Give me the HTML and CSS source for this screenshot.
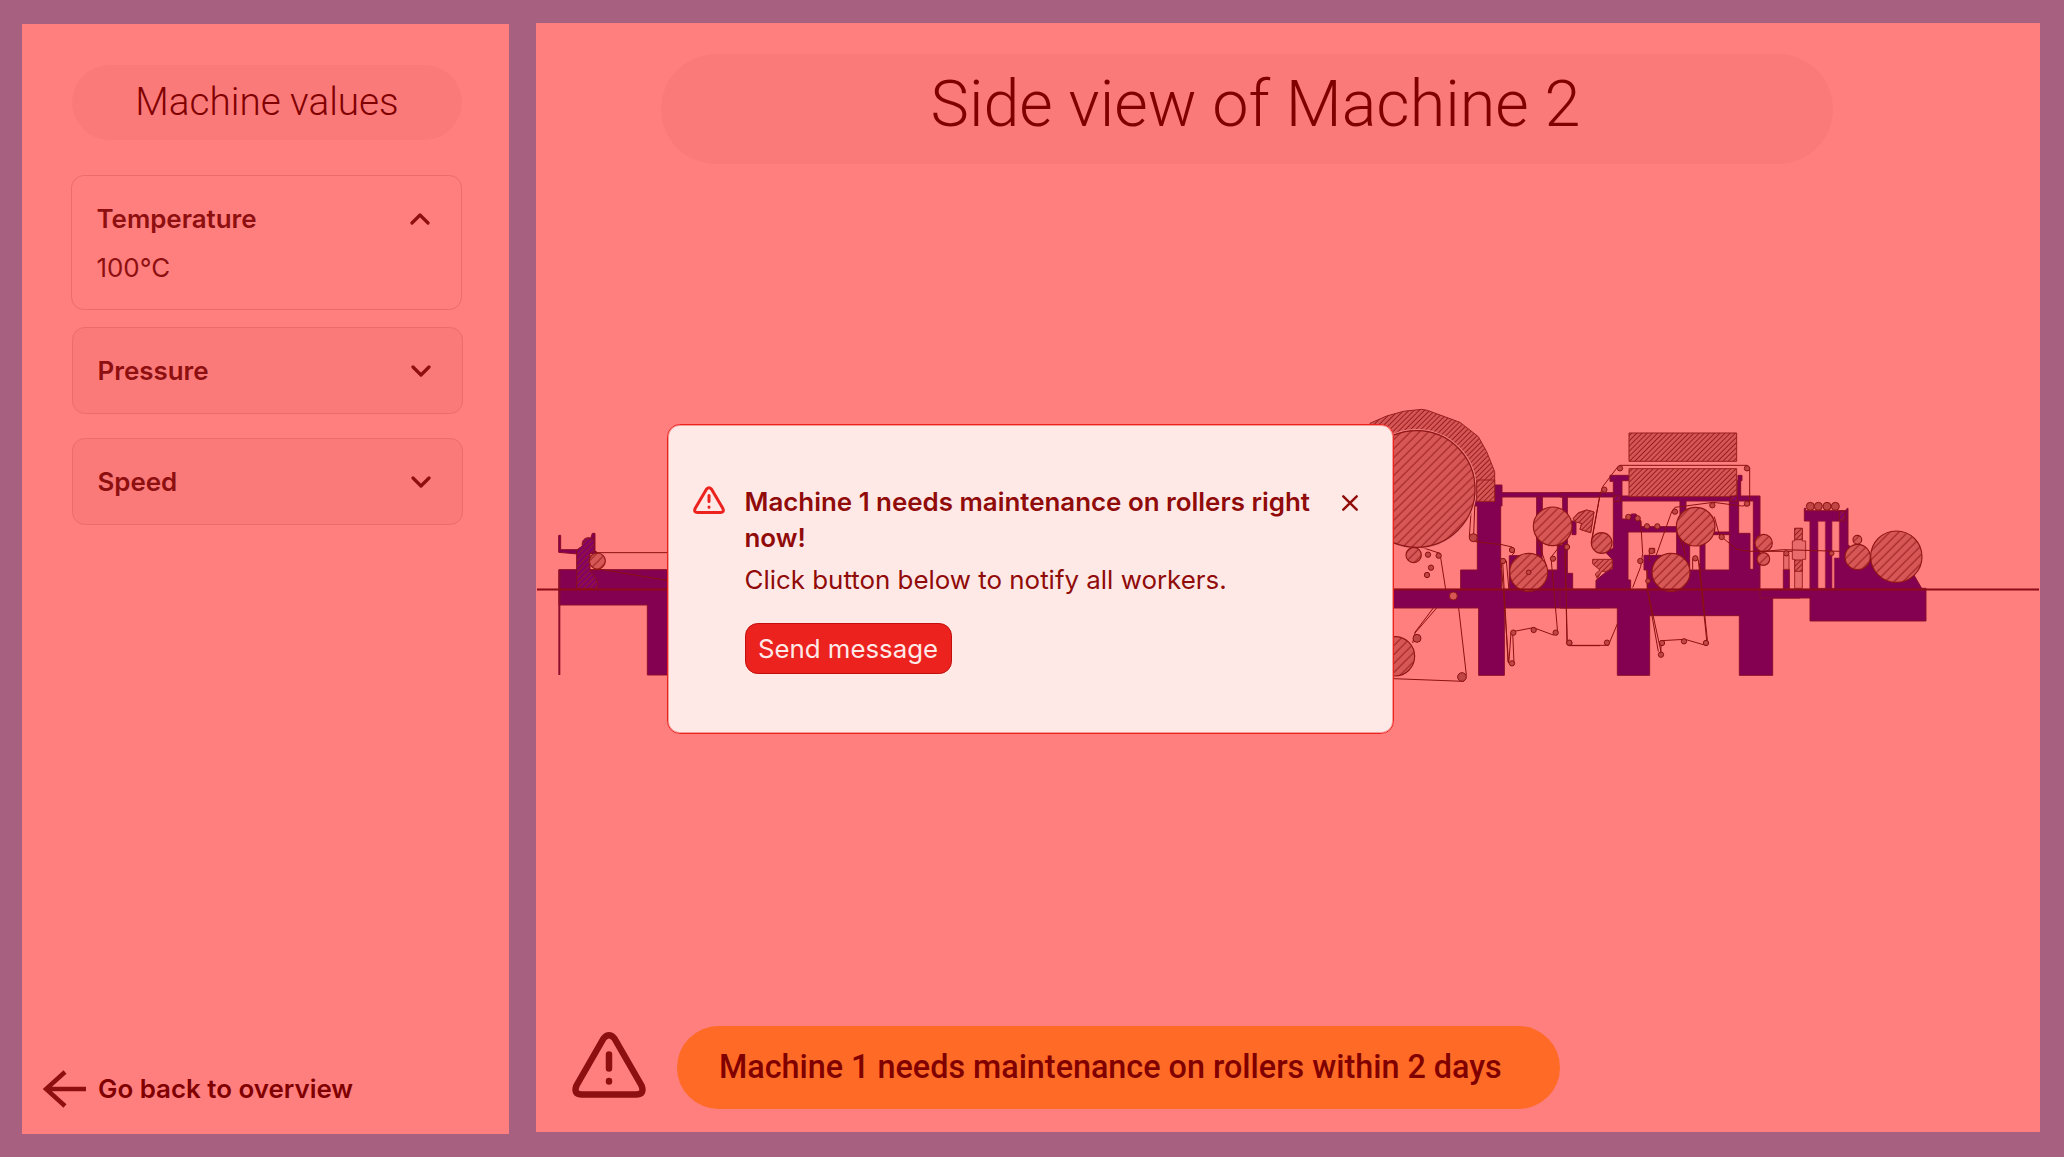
FILE: index.html
```html
<!DOCTYPE html>
<html lang="en">
<head>
<meta charset="utf-8">
<title>Side view of Machine 2</title>
<link rel="stylesheet" href="styles.css">
</head>
<body>
<aside class="sidebar">
  <h2 class="sidebar-title">Machine values</h2>
  <section class="card card-open">
    <div class="card-head"><span>Temperature</span>
      <svg class="chevron" viewBox="0 0 20 12"><path d="M2 10 10 2l8 8"/></svg></div>
    <p class="card-value">100°C</p>
  </section>
  <section class="card">
    <div class="card-head"><span>Pressure</span>
      <svg class="chevron" viewBox="0 0 20 12"><path d="M2 2l8 8 8-8"/></svg></div>
  </section>
  <section class="card card-last">
    <div class="card-head"><span>Speed</span>
      <svg class="chevron" viewBox="0 0 20 12"><path d="M2 2l8 8 8-8"/></svg></div>
  </section>
  <a class="back">
    <svg class="back-icon" viewBox="0 0 43 38"><path d="M43 19H3M22 2 3 19l19 17"/></svg>
    <span>Go back to overview</span>
  </a>
</aside>

<main class="main">
  <h1 class="main-title">Side view of Machine 2</h1>
  <svg class="machine" viewBox="536 400 1504 300">
    <defs>
      <pattern id="wide" width="19" height="19" patternUnits="userSpaceOnUse" patternTransform="rotate(45)">
        <rect class="steel" width="19" height="19"/><path class="hatch" d="M6 0V19"/>
      </pattern>
      <pattern id="fine" width="11" height="11" patternUnits="userSpaceOnUse" patternTransform="rotate(45)">
        <rect class="steel" width="11" height="11"/><path class="hatch" d="M4 0V11"/>
      </pattern>
      <pattern id="dark" width="12" height="12" patternUnits="userSpaceOnUse" patternTransform="rotate(45)">
        <rect class="dark" width="12" height="12"/><path class="hatch" d="M4 0V12"/>
      </pattern>
    </defs>

    <!-- unwinder -->
    <g transform="translate(530 510) scale(.33333)">
      <path class="frame" d="M87 179H480V495H352V285H87z"/>
      <path class="leg" d="M88 179V495"/>
      <path class="frame" d="M86 76h6v43h50v13l-56-5zM187 70h8v53l12 8h-25V85z"/>
      <path fill="url(#dark)" class="edge" d="M140 236V120l17-12c-3-16 8-26 20-25l16 6v34l12 7h-25v50l15 22c10 14 10 22 5 34z"/>
      <path class="web" d="M195 128H420M182 179h35l200 33"/>
      <circle class="roll" cx="202" cy="153" r="24"/>
    </g>

    <!-- drying drum and first printing unit -->
    <g transform="translate(1360 390) scale(.33333)">
      <path class="frame" d="M100 598H302V540H352V348H342V285H426V308H720V321H622V550H638V598H720V654H433V856H356V654H100z
        M426 348H422V540H424V598H448V497H546V321H426z M546 321V540H592V465H608V321z"/>
      <path class="frame" d="M530 321h16v176h-16zM636 393h12v41h-12z"/>
      <path class="web" d="M335 340 328 440l10 14 88 10 30 7 8 15-8 10M345 330l-4 105M185 472l55 18 17 108M296 654l23 200-8 20-211-8M230 654l-65 75-7 30M220 654l-56 74
        M428 512l16 305M439 512l8 90M424 520l22 300M462 820l-4-95 62-12 60 22 13-8-20-225 35-45M453 728l-6 85M530 440l30 90M615 470l6 290 8 7h91M718 325l-24 130"/>
      <path class="shape-fine" d="M30 100 80 78 130 64 185 58 202 61 300 97 355 140 380 185 404 245V334H350L346 265 325 208 290 165 240 132 170 118 100 135 60 150z"/>
      <circle class="light" cx="170" cy="297" r="178"/>
      <path class="shape-fine" d="M350 334V270H404V334z"/>
      <circle class="roll" cx="170" cy="297" r="175"/>
      <circle class="roll" cx="105" cy="799" r="59"/>
      <circle class="roll" cx="578" cy="409" r="58"/>
      <circle class="roll" cx="506" cy="547" r="57"/>
      <circle class="roll" cx="161" cy="495" r="23"/>
      <path class="shape-fine" d="M640 385 655 368 680 360 702 366 692 428 660 418 665 400 645 395z"/>
      <g class="small">
        <circle cx="204" cy="494" r="8"/><circle cx="236" cy="497" r="8"/><circle cx="213" cy="533" r="8"/><circle cx="201" cy="555" r="8"/>
        <circle cx="171" cy="745" r="12"/><circle cx="306" cy="861" r="13"/><circle cx="340" cy="443" r="12"/><circle cx="456" cy="480" r="8"/>
        <circle cx="429" cy="513" r="8"/><circle cx="579" cy="506" r="8"/><circle cx="621" cy="471" r="8"/><circle cx="506" cy="547" r="7"/>
        <circle cx="460" cy="728" r="8"/><circle cx="521" cy="720" r="8"/><circle cx="587" cy="728" r="8"/><circle cx="628" cy="759" r="8"/><circle cx="456" cy="820" r="8"/>
      </g>
      <circle class="knob" cx="280" cy="618" r="12"/>
    </g>

    <!-- second printing unit and oven -->
    <g transform="translate(1560 420) scale(.33333)">
      <path class="frame" d="M0 508H108V481L157 440V418L136 396 160 385V184H150V166H208V182H186V228H532V182H534V166H546V182H542V228H600V508H720V534H638V766H538V587H269V766H172V564H0z
        M186 243V297H205L214 282H228L243 305V320H350L360 300V243z
        M204 336V480H212V508H262V450H252V406H350V336z
        M378 243V450H508V243z M536 243V340H570V448H580V243z"/>
      <path class="frame" d="M0 218H160V231H0zM374 320h15v130h-15zM420 370h15v80h-15zM460 336h50v8h-50z"/>
      <path class="web" d="M95 365 120 225 128 200 172 142 180 136H562L569 145V255L545 258 460 247 384 257M242 300 248 400M218 503 242 440M248 400 242 440M15 400 22 668 30 676H145L172 612M288 408 335 275 345 262 384 257M352 330 376 405M463 290 478 345 530 388 570 394H720M260 450 262 508 295 695M262 508 306 708M302 700 304 662 375 658 430 674 443 668 418 430M398 448V415L406 408 415 420 440 660M268 425V385H284V400"/>
      <path class="shape-fine" d="M207 39H530V124H207zM207 146H530V230H207z"/>
      <path class="shape-fine" d="M40 295 55 280 80 270 102 276 92 338 60 328 65 310 45 305zM98 418H157V446L140 454H125L112 476 106 462 120 450 98 432z"/>
      <path fill="url(#dark)" class="edge" d="M162 228h20v16h-20zM512 228h20v16h-20z"/>
      <circle class="roll" cx="125" cy="369" r="31"/>
      <circle class="roll" cx="407" cy="320" r="58"/>
      <circle class="roll" cx="333" cy="457" r="57"/>
      <circle class="roll" cx="611" cy="369" r="26"/>
      <circle class="roll" cx="610" cy="417" r="19"/>
      <g class="small">
        <circle cx="180" cy="145" r="8"/><circle cx="133" cy="209" r="8"/><circle cx="561" cy="145" r="8"/><circle cx="561" cy="251" r="8"/>
        <circle cx="457" cy="256" r="8"/><circle cx="345" cy="275" r="8"/><circle cx="205" cy="291" r="8"/><circle cx="233" cy="295" r="8"/>
        <circle cx="261" cy="319" r="8"/><circle cx="292" cy="319" r="8"/><circle cx="485" cy="351" r="8"/><circle cx="275" cy="393" r="8"/>
        <circle cx="241" cy="423" r="8"/><circle cx="264" cy="483" r="7"/><circle cx="406" cy="415" r="8"/><circle cx="306" cy="669" r="8"/>
        <circle cx="372" cy="664" r="8"/><circle cx="438" cy="669" r="8"/><circle cx="303" cy="704" r="8"/><circle cx="28" cy="668" r="8"/><circle cx="141" cy="668" r="8"/>
      </g>
    </g>

    <!-- rewinder -->
    <g transform="translate(1760 480) scale(.33333)">
      <path class="frame" d="M0 328H70V268H88V328H150V123H133V85H137V92H256L262 85H264V195L335 240 462 285 485 325H498V423H150V354H0z"/>
      <path class="cut" d="M174 124H196V325H174zM216 124H238V234H223V325H216z"/>
      <path class="soft" d="M71 225h16v43H71zM97 183h7v-38h23v38h10v55h-10v87h-23v-87h-7z"/>
      <path class="shape-fine" d="M104 145h23v34h-23zM104 240h23v34h-23z"/>
      <path fill="url(#dark)" class="edge" d="M238 93h17v30h-17z"/>
      <path class="web" d="M0 215 70 209 240 214"/>
      <circle class="roll" cx="409" cy="230" r="77"/>
      <circle class="roll" cx="293" cy="231" r="38"/>
      <circle class="roll" cx="292" cy="179" r="13"/>
      <g class="small">
        <circle cx="151" cy="79" r="12"/><circle cx="175" cy="79" r="12"/><circle cx="201" cy="79" r="12"/><circle cx="226" cy="79" r="12"/>
        <circle cx="79" cy="220" r="8"/><circle cx="215" cy="220" r="7"/>
      </g>
    </g>
    <path class="floor" d="M537 589.5H2039"/>
  </svg>

  <div class="notice">
    <svg class="notice-icon" viewBox="0 0 74 66"><path d="M31.500 6.500 4.500 53.500Q1 62.500 10 62.500H64Q73 62.500 69.500 53.500L42.500 6.500Q37 0 31.500 6.500z"/><path d="M37 22.500V36.500M37 49v.6"/></svg>
    <p class="notice-text">Machine 1 needs maintenance on rollers within 2 days</p>
  </div>
</main>

<div class="dialog" role="alertdialog">
  <svg class="dialog-icon" viewBox="0 0 32 28"><path d="M13.600 3 2.100 22.600Q.6 26.500 4.500 26.500H27.500Q31.400 26.500 29.900 22.600L18.400 3Q16 .3 13.600 3z"/><path d="M16 9.500V15.500M16 21v.2"/></svg>
  <div class="dialog-body">
    <h3 class="dialog-title">Machine 1 needs maintenance on rollers right now!</h3>
    <p class="dialog-text">Click button below to notify all workers.</p>
    <button class="dialog-button">Send message</button>
  </div>
  <svg class="dialog-close" viewBox="0 0 16 16"><path d="M1.300 1.300 14.700 14.700M14.700 1.300 1.300 14.700"/></svg>
</div>
</body>
</html>
```
FILE: styles.css
```css
* { box-sizing: border-box; margin: 0; }

body {
  width: 2064px;
  height: 1157px;
  display: flex;
  align-items: flex-start;
  gap: 27px;
  padding: 23px 24px 0 22px;
  background: #a7607f;
  font-family: Inter, sans-serif;
  font-size: 25.9px;
  line-height: 36px;
  color: #8e0f0f;
  overflow: hidden;
  position: relative;
}

svg { display: block; fill: none; flex: none; }

.sidebar {
  width: 487px;
  height: 1110px;
  margin-top: 1px;
  padding: 41px 46px 0 49px;
  background: #ff7f7f;
  display: flex;
  flex-direction: column;
}

.sidebar-title {
  height: 75px;
  margin: 0 1px 35px;
  border-radius: 38px;
  background: #fa7a7a;
  color: #800000;
  font: 300 38.7px/74px Roboto, sans-serif;
  text-align: center;
}

.card {
  height: 87px;
  margin: 0 0 24px 1px;
  width: 391px;
  padding: 25px 31px 0 24.5px;
  border: 1.6px solid #ec6c6c;
  border-radius: 12.8px;
  background: #fa7a7a;
}
.card-open { height: 135px; margin: 0 0 17px; background: transparent; }
.card-last { margin-bottom: 0; }
.card-head {
  display: flex;
  justify-content: space-between;
  align-items: center;
  font-weight: 600;
}
.card-value { margin-top: 12.5px; }
.chevron { width: 20px; height: 12px; margin-top: -1px; stroke: #8e0f0f; stroke-width: 3.2; stroke-linecap: round; stroke-linejoin: round; }

.back {
  display: flex;
  align-items: center;
  gap: 12px;
  margin: auto 0 26px -28px;
  color: #800000;
  font-weight: 600;
  white-space: nowrap;
}
.back-icon { width: 43px; height: 38px; stroke: #8e0f0f; stroke-width: 4.5; }

.main {
  width: 1504px;
  height: 1109px;
  padding-top: 31px;
  background: #ff7f7f;
}

.main-title {
  width: 1172px;
  height: 110px;
  margin-left: 125px;
  padding-left: 17px;
  border-radius: 55px;
  background: #fa7a7a;
  color: #800000;
  font: 300 64.7px/101px Roboto, sans-serif;
  text-align: center;
}

.machine { width: 1504px; height: 300px; margin-top: 236px; }
.frame { fill: #840050; fill-rule: evenodd; stroke: #8b0d2b; stroke-width: 3; }
.leg { stroke: #8b0d2b; stroke-width: 6; }
.cut { fill: #ff7f7f; stroke: #a32035; stroke-width: 2; }
.steel { fill: #d75757; }
.dark { fill: #840068; }
.hatch { stroke: #981d1d; stroke-width: 3; }
.edge { stroke: #8b0d1b; stroke-width: 3; }
.web { stroke: #8c1010; stroke-width: 3; }
.light { stroke: #f18080; stroke-width: 4; }
.roll { fill: url(#wide); stroke: #921616; stroke-width: 3.5; }
.shape-fine { fill: url(#fine); stroke: #9a1f1f; stroke-width: 3; }
.soft { fill: #ea6b6b; stroke: #a32525; stroke-width: 3; }
.small circle { fill: #c04545; stroke: #8c1212; stroke-width: 3; }
.knob { fill: #d75757; stroke: #921616; stroke-width: 3; }
.floor { stroke: #8e0c18; stroke-width: 2; }

.notice { display: flex; align-items: center; gap: 31px; margin: 326px 0 0 36px; }
.notice-icon { width: 74px; height: 66px; margin-top: -5px; stroke: #8e0f0f; stroke-width: 6.5; stroke-linecap: round; stroke-linejoin: round; }
.notice-text {
  width: 883px;
  height: 83px;
  padding-left: 42px;
  border-radius: 42px;
  background: #ff6a26;
  color: #800000;
  font: 500 32.35px/82px Roboto, sans-serif;
  white-space: nowrap;
}

.dialog {
  position: absolute;
  left: 667px;
  top: 424px;
  width: 727px;
  height: 310px;
  display: flex;
  padding: 59px 35.5px 0 25px;
  border: 1px solid #ec221f;
  box-shadow: inset 0 0 0 1px rgba(236, 34, 31, .4);
  border-radius: 12.8px;
  background: #fee9e7;
  color: #900b09;
}
.dialog-icon { width: 32px; height: 28px; margin-top: 2px; stroke: #ec221f; stroke-width: 3; stroke-linecap: round; stroke-linejoin: round; }
.dialog-body { width: 576px; margin-left: 19.5px; }
.dialog-title { font-size: 25.9px; font-weight: 600; line-height: 36px; }
.dialog-text { margin-top: 6px; white-space: nowrap; }
.dialog-button {
  display: block;
  width: 207px;
  height: 51px;
  margin-top: 25px;
  padding: 0;
  border: 1.6px solid #c00f0c;
  border-radius: 12.8px;
  background: #ec221f;
  color: #fee9e7;
  font: 400 25.8px/36px Inter, sans-serif;
}
.dialog-close { width: 16px; height: 16px; margin: 11px 0 0 auto; stroke: #900b09; stroke-width: 2.4; stroke-linecap: round; }
```
